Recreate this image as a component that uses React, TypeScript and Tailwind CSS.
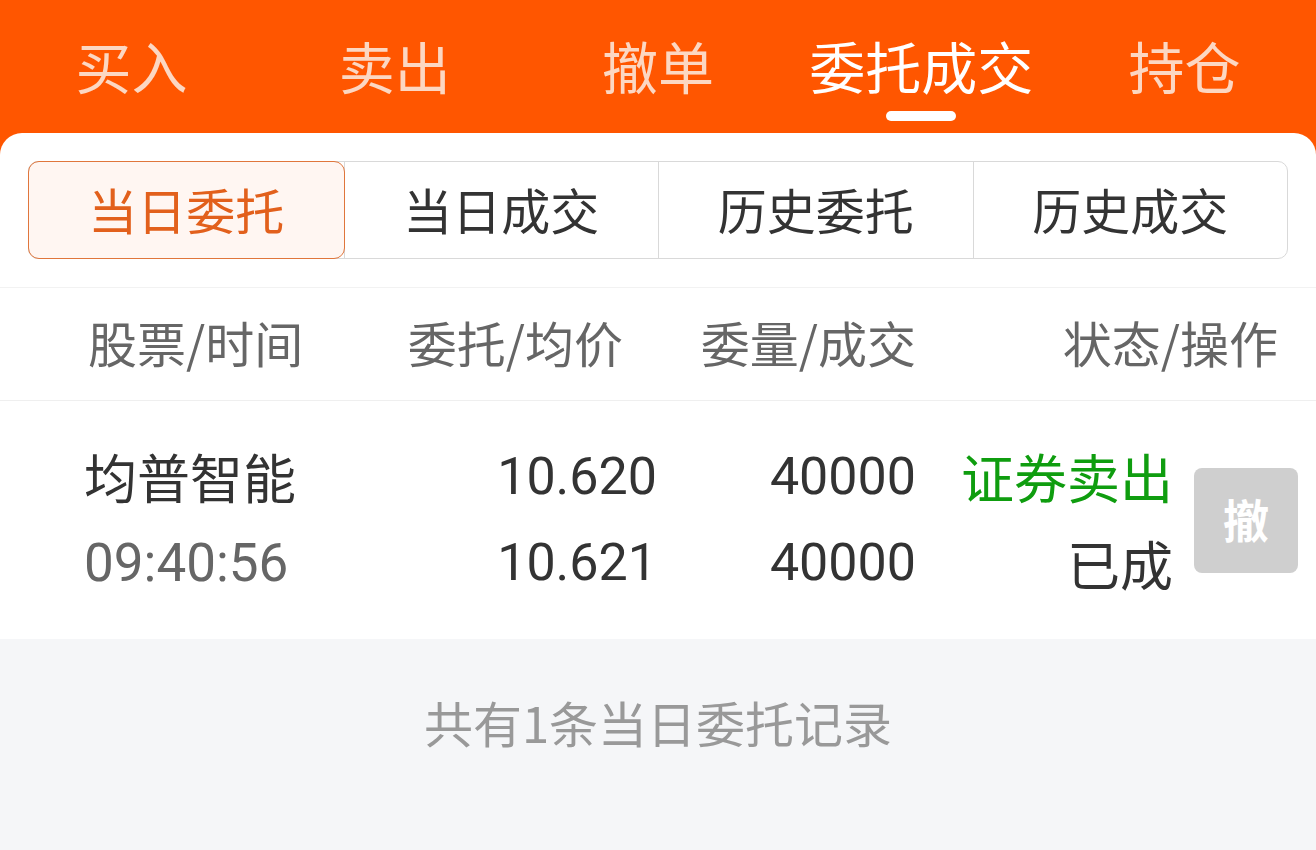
import { useState } from 'react'

const topTabs = ['买入', '卖出', '撤单', '委托成交', '持仓']
const subTabs = ['当日委托', '当日成交', '历史委托', '历史成交']

const cjk = "font-['Noto_Sans_CJK_SC',sans-serif]"
const num = "font-['Roboto','Noto_Sans_CJK_SC',sans-serif]"

export default function App() {
  const [tab, setTab] = useState(3)
  const [sub, setSub] = useState(0)

  return (
    <div className={`w-[1316px] h-[850px] bg-[#ff5600] flex flex-col overflow-hidden ${cjk}`}>
      {/* top tabs */}
      <div className="h-[133px] grid grid-cols-5 shrink-0">
        {topTabs.map((t, i) => (
          <button
            key={t}
            onClick={() => setTab(i)}
            className="relative flex items-center justify-center pb-[4px]"
          >
            <span
              className={`text-[56px] leading-none ${i === tab ? 'text-white' : 'text-[#fcd7c2]'}`}
            >
              {t}
            </span>
            {i === tab && (
              <span className="absolute bottom-[12px] left-1/2 -translate-x-1/2 w-[70px] h-[10px] rounded-full bg-white" />
            )}
          </button>
        ))}
      </div>

      <div className="flex-1 bg-white rounded-t-[22px] flex flex-col">
        {/* segmented control */}
        <div className="px-[28px] pt-[28px] pb-[28px] border-b border-[#f2f2f2]">
          <div className="grid grid-cols-4 h-[98px] rounded-[10px] border border-[#d9d9d9]">
            {subTabs.map((s, i) => (
              <button
                key={s}
                onClick={() => setSub(i)}
                className={`flex items-center justify-center text-[49px] leading-none pb-[4px] ${
                  i > 0 ? 'border-l border-[#d9d9d9]' : ''
                } ${
                  i === sub
                    ? 'bg-[#fff6f2] text-[#e2601c] outline outline-1 outline-[#e0763c] rounded-[10px] z-10'
                    : 'text-[#333333]'
                } ${i === 0 ? 'rounded-l-[10px]' : ''} ${i === 3 ? 'rounded-r-[10px]' : ''}`}
              >
                {s}
              </button>
            ))}
          </div>
        </div>

        {/* header row */}
        <div className="h-[113px] flex items-center pb-[6px] text-[49px] leading-none text-[#666666] border-b border-[#efefef]">
          <div className="w-[378px] pl-[88px]">股票/时间</div>
          <div className="w-[245px] text-right">委托/均价</div>
          <div className="w-[293px] text-right">委量/成交</div>
          <div className="flex-1 text-right pr-[38px]">状态/操作</div>
        </div>

        {/* data row */}
        <div className="h-[238px] flex items-center">
          <div className="w-[378px] pl-[84px] flex flex-col gap-[34px]">
            <span className="text-[53px] leading-none text-[#333333]">均普智能</span>
            <span className={`${num} text-[53px] leading-none text-[#666666]`}>09:40:56</span>
          </div>
          <div className={`w-[279px] flex flex-col gap-[34px] items-end ${num} text-[52px] leading-none text-[#333333]`}>
            <span>10.620</span>
            <span>10.621</span>
          </div>
          <div className={`w-[259px] flex flex-col gap-[34px] items-end ${num} text-[52px] leading-none text-[#333333]`}>
            <span>40000</span>
            <span>40000</span>
          </div>
          <div className="w-[257px] flex flex-col gap-[34px] items-end text-[53px] leading-none">
            <span className="text-[#0f9d0f]">证券卖出</span>
            <span className="text-[#333333]">已成</span>
          </div>
          <div className="pl-[21px]">
            <button className="w-[104px] h-[105px] rounded-[8px] bg-[#cfcfcf] text-white text-[46px] font-bold flex items-center justify-center pb-[4px]">
              撤
            </button>
          </div>
        </div>

        {/* footer */}
        <div className="flex-1 bg-[#f5f6f8] flex justify-center pt-[58px]">
          <span className="text-[49px] leading-none text-[#999999]">共有1条当日委托记录</span>
        </div>
      </div>
    </div>
  )
}
